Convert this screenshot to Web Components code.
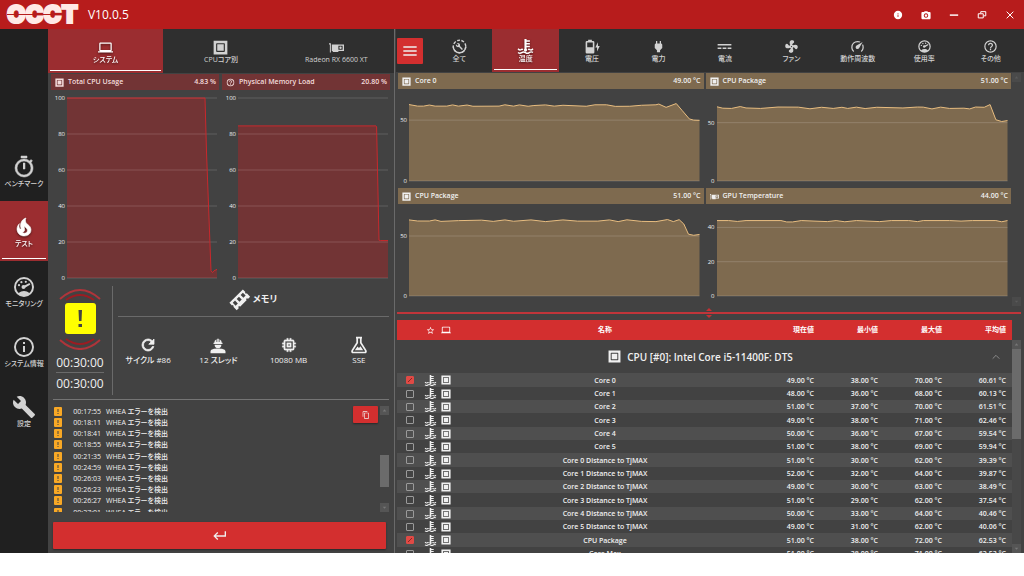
<!DOCTYPE html>
<html lang="ja">
<head>
<meta charset="utf-8">
<title>OCCT V10.0.5</title>
<style>
html, body { margin: 0; height: 100%; background: #fff; }
body {
  font: 500 7px/10px "Open Sans", "Noto Sans CJK JP", sans-serif;
  font-feature-settings: "palt";
  color: #f0f0f0;
}
</style>
</head>
<body>
<occt-app></occt-app>
<script>
const define = (name, html, setup) => {
  const template = document.createElement('template');
  template.innerHTML = html;
  customElements.define(name, class extends HTMLElement {
    connectedCallback() {
      if (this.shadowRoot) return;
      const root = this.attachShadow({ mode: 'open' });
      root.append(template.content.cloneNode(true));
      if (setup) setup(this, root);
    }
  });
};

/* ---------- icons ---------- */
const ICONS = {
  laptop: '<path d="M4,6H20V16H4M20,18A2,2 0 0,0 22,16V6C22,4.89 21.1,4 20,4H4C2.89,4 2,4.89 2,6V16A2,2 0 0,0 4,18H0V20H24V18H20Z"/>',
  timer: '<path d="M12,20A7,7 0 0,1 5,13A7,7 0 0,1 12,6A7,7 0 0,1 19,13A7,7 0 0,1 12,20M19.03,7.39L20.45,5.97C20,5.46 19.55,5 19.04,4.56L17.62,6C16.07,4.74 14.12,4 12,4A9,9 0 0,0 3,13A9,9 0 0,0 12,22C17,22 21,17.97 21,13C21,10.88 20.26,8.93 19.03,7.39M11,14H13V8H11M15,1H9V3H15V1Z" stroke="currentColor" stroke-width=".5"/>',
  fire: '<path d="M17.66 11.2C17.43 10.9 17.15 10.64 16.89 10.38C16.22 9.78 15.46 9.35 14.82 8.72C13.33 7.26 13 4.85 13.95 3C13 3.23 12.17 3.75 11.46 4.32C8.87 6.4 7.85 10.07 9.07 13.22C9.11 13.32 9.15 13.42 9.15 13.55C9.15 13.77 9 13.97 8.8 14.05C8.57 14.15 8.33 14.09 8.14 13.93C8.08 13.88 8.04 13.83 8 13.76C6.87 12.33 6.69 10.28 7.45 8.64C5.78 10 4.87 12.3 5 14.47C5.06 14.97 5.12 15.47 5.29 15.97C5.43 16.57 5.7 17.17 6 17.7C7.08 19.43 8.95 20.67 10.96 20.92C13.1 21.19 15.39 20.8 17.03 19.32C18.86 17.66 19.5 15 18.56 12.72L18.43 12.46C18.22 12 17.66 11.2 17.66 11.2M14.5 17.5C14.22 17.74 13.76 18 13.4 18.1C12.28 18.5 11.16 17.94 10.5 17.28C11.69 17 12.4 16.12 12.61 15.23C12.78 14.43 12.46 13.77 12.33 13C12.21 12.26 12.23 11.63 12.5 10.94C12.69 11.32 12.89 11.7 13.13 12C13.9 13 15.11 13.44 15.37 14.8C15.41 14.94 15.43 15.08 15.43 15.23C15.46 16.05 15.1 16.95 14.5 17.5Z" stroke="currentColor" stroke-width=".6"/>',
  gauge: '<path d="M12 2A10 10 0 0 0 2 12A10 10 0 0 0 12 22A10 10 0 0 0 22 12A10 10 0 0 0 12 2M12 4A8 8 0 0 1 20 12C20 14.4 19 16.5 17.3 18C15.9 16.7 14 16 12 16C10 16 8.2 16.7 6.7 18C5 16.5 4 14.4 4 12A8 8 0 0 1 12 4Z"/><circle cx="11.5" cy="12" r="2"/><path d="M11 11.2L17 8.2C18.3 7.8 18.8 9.4 17.7 9.9L12.5 13Z"/><circle cx="7" cy="10.2" r="1.1"/><circle cx="9.4" cy="7.2" r="1.1"/><circle cx="13.8" cy="6.8" r="1.1"/>',
  info: '<path d="M11,9H13V7H11M12,20C7.59,20 4,16.41 4,12C4,7.59 7.59,4 12,4C16.41,4 20,7.59 20,12C20,16.41 16.41,20 12,20M12,2A10,10 0 0,0 2,12A10,10 0 0,0 12,22A10,10 0 0,0 22,12A10,10 0 0,0 12,2M11,17H13V11H11V17Z"/>',
  infofill: '<path d="M13,9H11V7H13M13,17H11V11H13M12,2A10,10 0 0,0 2,12A10,10 0 0,0 12,22A10,10 0 0,0 22,12A10,10 0 0,0 12,2Z"/>',
  help: '<path d="M11,18H13V16H11V18M12,2A10,10 0 0,0 2,12A10,10 0 0,0 12,22A10,10 0 0,0 22,12A10,10 0 0,0 12,2M12,20C7.59,20 4,16.41 4,12C4,7.59 7.59,4 12,4C16.41,4 20,7.59 20,12C20,16.41 16.41,20 12,20M12,6A4,4 0 0,0 8,10H10A2,2 0 0,1 12,8A2,2 0 0,1 14,10C14,12 11,11.75 11,15H13C13,12.75 16,12.5 16,10A4,4 0 0,0 12,6Z"/>',
  wrench: '<path d="M22.7,19L13.6,9.9C14.5,7.6 14,4.9 12.1,3C10.1,1 7.1,0.6 4.7,1.7L9,6L6,9L1.6,4.7C0.4,7.1 0.9,10.1 2.9,12.1C4.8,14 7.5,14.5 9.8,13.6L18.9,22.7C19.3,23.1 19.9,23.1 20.3,22.7L22.6,20.4C23.1,20 23.1,19.3 22.7,19Z"/>',
  refresh: '<path d="M17.65,6.35C16.2,4.9 14.21,4 12,4A8,8 0 0,0 4,12A8,8 0 0,0 12,20C15.73,20 18.84,17.45 19.73,14H17.65C16.83,16.33 14.61,18 12,18A6,6 0 0,1 6,12A6,6 0 0,1 12,6C13.66,6 15.14,6.69 16.22,7.78L13,11H20V4L17.65,6.35Z" stroke="currentColor"/>',
  memory: '<path d="M17,17H7V7H17M21,11V9H19V7C19,5.89 18.1,5 17,5H15V3H13V5H11V3H9V5H7C5.89,5 5,5.89 5,7V9H3V11H5V13H3V15H5V17A2,2 0 0,0 7,19H9V21H11V19H13V21H15V19H17A2,2 0 0,0 19,17V15H21V13H19V11M13,13H11V11H13M15,9H9V15H15V9Z" stroke="currentColor" stroke-width=".4"/>',
  copy: '<path d="M19,21H8V7H19M19,5H8A2,2 0 0,0 6,7V21A2,2 0 0,0 8,23H19A2,2 0 0,0 21,21V7A2,2 0 0,0 19,5M16,1H4A2,2 0 0,0 2,3V17H4V3H16V1Z"/>',
  enter: '<path d="M19,5V11H5.83L9.41,7.41L8,6L2,12L8,18L9.41,16.58L5.83,13H21V5H19Z"/>',
  menu: '<path d="M2,5H22V7H2V5M2,11H22V13H2V11M2,17H22V19H2V17Z"/>',
  plug: '<path d="M16,7V3H14V7H10V3H8V7C7,7 6,8 6,9V14.5L9.5,18V21H14.5V18L18,14.5V9C18,8 17,7 16,7Z"/>',
  dc: '<path d="M1,8H23V10.5H1ZM1,13.5H7V16H1ZM9,13.5H15V16H9ZM17,13.5H23V16H17Z"/>',
  fan: '<path d="M12,11A1,1 0 0,0 11,12A1,1 0 0,0 12,13A1,1 0 0,0 13,12A1,1 0 0,0 12,11M12.5,2C17,2 17.11,5.57 14.75,6.75C13.76,7.24 13.32,8.29 13.13,9.22C13.61,9.42 14.03,9.73 14.35,10.13C18.05,8.13 22.03,8.92 22.03,12.5C22.03,17 18.46,17.1 17.28,14.73C16.78,13.74 15.72,13.3 14.79,13.11C14.59,13.59 14.28,14 13.88,14.34C15.87,18.03 15.08,22 11.5,22C7,22 6.91,18.42 9.27,17.24C10.25,16.75 10.69,15.71 10.89,14.79C10.4,14.59 9.97,14.27 9.65,13.87C5.96,15.85 2,15.07 2,11.5C2,7 5.56,6.89 6.74,9.26C7.24,10.25 8.29,10.68 9.22,10.87C9.41,10.39 9.73,9.97 10.14,9.65C8.15,5.96 8.94,2 12.5,2Z"/>',
  speed: '<path d="M12,16A3,3 0 0,1 9,13C9,11.88 9.61,10.9 10.5,10.39L20.21,4.77L14.68,14.35C14.18,15.33 13.17,16 12,16M12,3C13.81,3 15.5,3.5 16.97,4.32L14.87,5.53C14,5.19 13,5 12,5A8,8 0 0,0 4,13C4,15.21 4.89,17.21 6.34,18.65H6.35C6.74,19.04 6.74,19.67 6.35,20.06C5.96,20.45 5.32,20.45 4.93,20.07C3.12,18.26 2,15.76 2,13A10,10 0 0,1 12,3M22,13C22,15.76 20.88,18.26 19.07,20.07C18.68,20.45 18.05,20.45 17.66,20.06C17.27,19.67 17.27,19.04 17.66,18.65C19.11,17.2 20,15.21 20,13C20,12 19.81,11 19.46,10.1L20.67,8C21.5,9.5 22,11.18 22,13Z"/>',
  star: '<path d="M12,15.39L8.24,17.66L9.23,13.38L5.91,10.5L10.29,10.13L12,6.09L13.71,10.13L18.09,10.5L14.77,13.38L15.76,17.66M22,9.24L14.81,8.63L12,2L9.19,8.63L2,9.24L7.45,13.97L5.82,21L12,17.27L18.18,21L16.54,13.97L22,9.24Z"/>',
  chip: '<path fill-rule="evenodd" d="M1,1H23V23H1ZM5,6V18L6,19H18L19,18V6L18,5H6ZM6.8,6.8H17.2V17.2H6.8Z"/>',
  coolant: '<path d="M10.3,0H13.7V2H19V4.4H13.7V6.4H19V8.8H13.7V10.8H19V13.2H13.7V15.5A2.6,2.6 0 1,1 10.3,15.5Z"/><path d="M0,15.5Q2.500,18.500 5,17Q6.5,16 8,17M24,15.5Q21.500,18.500 19,17Q17.500,16 16,17M0,21.5Q3,24 6,21.8T12,21.8T18,21.8T24,21.5" fill="none" stroke="currentColor" stroke-width="2.2"/>',
  battery: '<path fill-rule="evenodd" d="M5,1H11V3H13Q15,3 15,5V21Q15,23 13,23H3Q1,23 1,21V5Q1,3 3,3H5ZM3.5,5.5V13H12.5V5.5Z"/><path d="M20.5,5L16.5,13.5H19.3V20L23.6,11H20.8Z"/>',
  all: '<circle cx="12" cy="12" r="10" fill="none" stroke="currentColor" stroke-width="2.2" stroke-dasharray="4.6 2.4"/><path d="M2,12A10,10 0 0,0 12,22A10,10 0 0,0 22,12" fill="none" stroke="currentColor" stroke-width="2.2"/><path d="M17.5,16L12.8,11.3C13.2,9.8 12.8,8.3 11.7,7.3C10.6,6.3 9.2,6.1 8,6.6L10.4,9L8.8,10.6L6.4,8.3C5.9,9.6 6.2,11 7.2,12C8.3,13.1 9.9,13.4 11.2,12.9L15.9,17.6Z"/>',
  gpu: '<path fill-rule="evenodd" d="M0,5H3V20H1.4V7H0ZM4.5,7H24V17.5H15V19H6V17.5H4.5ZM15,9V15.5H21.8V9Z"/><circle cx="18.4" cy="12.3" r="1.9"/>',
  ram: '<g transform="rotate(-45 12 12)"><path fill-rule="evenodd" d="M0,6H24V10.500A1,1 0 0,0 24,13V19H20V17.500H18V19H6V17.500H4V19H0V13A1,1 0 0,0 0,10.500ZM3,9V14H7V9ZM10,9V14H14V9ZM17,9V14H21V9Z"/></g>',
  worker: '<path d="M7,9A5,5 0 0,1 10,4.2V8H11V3.5H13V8H14V4.2A5,5 0 0,1 17,9H18V10.5H6V9ZM7.5,11.5H16.5A4.5,4.5 0 0,1 7.5,11.5M2,23V20.5C2,17.5 7,16.5 12,16.5S22,17.5 22,20.5V23Z"/>',
  flask: '<path d="M8,2.2H16M9.6,2.5V9L3,19.5Q2,22 4.5,22H19.5Q22,22 21,19.5L14.4,9V2.5" fill="none" stroke="currentColor" stroke-width="2.3"/><path d="M6.5,19L10,14L12,16L14,13.5L17.5,19Z"/>',
  camera: '<path fill-rule="evenodd" d="M3,5H8V3H16V5H21Q23,5 23,7V20Q23,22 21,22H3Q1,22 1,20V7Q1,5 3,5ZM12,8A5.3,5.3 0 1,0 12.01,8ZM12,10.2A3,3 0 1,1 11.99,10.2Z"/>',
  min: '<path d="M2,10.5H22V14H2Z"/>',
  restore: '<path d="M9,8V4H21V14H16M3,9H15V19H3Z" fill="none" stroke="currentColor" stroke-width="2.4"/>',
  close: '<path d="M4,4L20,20M20,4L4,20" fill="none" stroke="currentColor" stroke-width="2.4"/>',
  chevron: '<path d="M4,16L12,8L20,16" fill="none" stroke="currentColor" stroke-width="2"/>',
  up: '<path d="M6,15L12,8L18,15Z"/>',
  down: '<path d="M6,9L12,16L18,9Z"/>'
};
define('ui-icon', `<style>
:host { display: block; flex: none; width: var(--size, 16px); height: var(--size, 16px); }
svg { display: block; width: 100%; height: 100%; fill: currentColor; overflow: visible; }
</style><svg viewBox="0 0 24 24" aria-hidden="true"></svg>`,
(el, root) => { root.querySelector('svg').innerHTML = ICONS[el.getAttribute('name')]; });

/* ---------- title bar ---------- */
define('title-bar', `<style>
:host { display: flex; align-items: center; height: 29px; padding: 0 9px 0 7px; background: #b71c1c; color: #fff; }
.logo { position: relative; font: 900 24px/29px Inter, sans-serif; color: #ffe9e6; -webkit-text-stroke: 2px #ffe9e6; }
.logo::after { content: ""; position: absolute; left: 0; right: 18px; top: 14px; height: 1px; background: #b71c1c; }
h1 { margin: 0 auto 0 10px; font-size: 12px; line-height: 16px; font-weight: 500; }
.win { display: flex; gap: 18px; --size: 10px; }
button { all: unset; display: block; }
</style>
<span class="logo">OCCT</span><h1>V10.0.5</h1>
<div class="win">
<button aria-label="情報"><ui-icon name="infofill"></ui-icon></button>
<button aria-label="スクリーンショット"><ui-icon name="camera"></ui-icon></button>
<button aria-label="最小化"><ui-icon name="min"></ui-icon></button>
<button aria-label="元に戻す"><ui-icon name="restore"></ui-icon></button>
<button aria-label="閉じる"><ui-icon name="close"></ui-icon></button>
</div>`);

/* ---------- navigation button, used by the side bar and both tab bars ---------- */
define('nav-tab', `<style>
:host { display: block; flex: 1; min-width: 0; color: #d2d2d2; --size: 15px; }
:host([active]) { color: #fff; background: #9b2d30; }
:host([side]) { flex: none; height: 60px; --size: 24px; }
button { all: unset; box-sizing: border-box; width: 100%; height: 100%; padding-top: 2px; display: flex; flex-direction: column;
  align-items: center; justify-content: center; }
:host([active]) button { background: linear-gradient(#fff, #fff) center bottom 2px / calc(100% - 4px) 1px no-repeat; }
:host([active]) ui-icon, :host([active]) span { filter: drop-shadow(0 1px 1px #0008); }
span { white-space: nowrap; }
</style><button><ui-icon></ui-icon><span><slot></slot></span></button>`,
(el, root) => {
  const icon = document.createElement('ui-icon');
  icon.setAttribute('name', el.getAttribute('icon'));
  root.querySelector('ui-icon').replaceWith(icon);
});

define('side-nav', `<style>
:host { display: flex; flex-direction: column; justify-content: center; background: #202020; }
</style>
<nav>
<nav-tab side icon="timer">ベンチマーク</nav-tab>
<nav-tab side icon="fire" active>テスト</nav-tab>
<nav-tab side icon="gauge">モニタリング</nav-tab>
<nav-tab side icon="info">システム情報</nav-tab>
<nav-tab side icon="wrench">設定</nav-tab>
</nav>`);

/* ---------- scroll bar: the range gives the thumb's start and end in percent of the track ---------- */
define('scroll-bar', `<style>
:host { display: flex; flex-direction: column; width: 9px; background: var(--track, transparent); }
i { display: grid; place-items: center; flex: none; height: 9px; background: #555; color: #777; --size: 7px; }
:host([idle]) i { background: #4a4a4a; color: #5a5a5a; }
b { background: #6b6b6b; }
</style><i><ui-icon name="up"></ui-icon></i><s></s><b></b><s></s><i><ui-icon name="down"></ui-icon></i>`,
(el, root) => {
  const [from, to] = (el.getAttribute('range') || '0 0').split(' ').map(Number);
  const [before, after] = root.querySelectorAll('s');
  before.style.flex = `${from} 0 0px`;
  root.querySelector('b').style.flex = `${to - from} 0 0px`;
  after.style.flex = `${100 - to} 0 0px`;
});

/* ---------- chart ---------- */
const SERIES = {
  cpu: [[0,100],[92,100],[93,70],[96,4],[97,3],[98,4],[100,4.8]],
  mem: [[0,84.5],[92,84.5],[92.4,84],[94,21],[95,20.8],[100,20.8]],
  core0: [[0,62.8],[3,61.5],[5,61.5],[7,62.4],[9,61.5],[13,61.5],[15,62.5],[17,61.5],[20,62.4],[22,61.4],[31,61.5],[33,62.6],[36,61.5],[38,62.5],[41,61.4],[43,62],[47,62.5],[50,61.5],[53,62.2],[61,61.4],[64,62.6],[68,62.6],[71,61.3],[76,61.4],[80,62.2],[85,62.6],[86,63.2],[88.5,60.5],[92,63.6],[94,58],[96.5,51],[98,50],[100,49.8]],
  pkgA: [[0,63.4],[3,62.5],[7,62.5],[9,63.4],[11,62.2],[17,62.8],[25,63.2],[29,62.2],[33,63.4],[36,62.3],[42,63.4],[47,62],[53,63.4],[58,62.4],[65,62.4],[69,63.4],[72,62],[75,63.5],[80,62.2],[85,62],[89,63.7],[91,62],[93,63.6],[94.6,60],[96.2,51.5],[98,50.6],[100,51.3]],
  pkgB: [[0,63.6],[2,62.4],[5,62.2],[8,63.8],[10,62.6],[15,62.2],[21,63.4],[28,63.3],[32,61.9],[36,63.2],[40,62.2],[43,63.2],[45,62.2],[48,63.3],[51,62.1],[55,63.2],[64,62.6],[69,63.4],[71,63.3],[74,61.8],[77,63.3],[80,62.2],[85,62.4],[87,61.8],[89,63.4],[92,63.2],[94,65.5],[96,52.5],[98,51],[100,51.8]],
  gpu: [[0,44],[4,44],[7,43.5],[10,44],[22,44],[24,43.2],[26,43.2],[29,44],[38,43.4],[41,44],[44,43.3],[48,44],[56,43.4],[60,44],[66,44],[69,43.4],[71,44],[80,44],[84,43.7],[88,44],[96,44],[98,43.3],[100,44]]
};

define('sensor-chart', `<style>
:host { display: flex; flex-direction: column; min-width: 0; --head: #7e6a4f; --line: #e8bd80; --fill: #7e6a4f; --axis: 11px; }
:host([tone="red"]) { --head: #723435; --line: #c9282c; --fill: #723435; --axis: 16px; }
header { display: flex; align-items: center; gap: 4px; height: 16px; padding: 0 3px 0 4px; background: var(--head); --size: 9px; }
header output { margin-left: auto; }
header span, header output { line-height: 16px; font-weight: 600; }
:host([tone="red"]) header { color: #f4dcdc; }
figure { flex: 1; display: grid; grid-template-columns: var(--axis) 1fr; margin: 8px 4px 7px 0; min-height: 0; }
:host([tone="red"]) figure { margin: 8px 2px 4px 0; }
.axis { display: flex; flex-direction: column; font-size: 6px; padding-right: 2px; text-align: right; }
.axis span { height: 0; line-height: 0; }
svg { display: block; width: 100%; height: 100%; min-height: 0; overflow: visible; }
svg * { vector-effect: non-scaling-stroke; }
</style>
<header><span></span><output></output></header>
<figure><div class="axis"></div><svg viewBox="0 0 100 100" preserveAspectRatio="none" aria-hidden="true"></svg></figure>`,
(el, root) => {
  const get = n => el.getAttribute(n);
  const max = Number(get('max'));
  const ticks = get('ticks').split(' ').map(Number);
  const icon = document.createElement('ui-icon');
  icon.setAttribute('name', get('icon'));
  root.querySelector('header').prepend(icon);
  root.querySelector('header span').textContent = get('label');
  root.querySelector('output').textContent = get('value');
  let last = max;
  root.querySelector('.axis').innerHTML = ticks.map(t => {
    const gap = `<i style="flex:${last - t} 0 0px"></i>`;
    last = t;
    return (t === max ? '' : gap) + `<span>${t}</span>`;
  }).join('');
  const y = v => 100 - v / max * 100;
  const line = SERIES[get('series')].map(([x, v]) => `${x},${y(v)}`).join(' ');
  const grid = ticks.map(t => `<path d="M0,${y(t)}H100" stroke="#fff" stroke-opacity=".16"/>`).join('');
  root.querySelector('svg').innerHTML =
    `<polygon points="0,100 ${line} 100,100" fill="var(--fill)"/>${grid}` +
    `<polyline points="${line}" fill="none" stroke="var(--line)"/>`;
});

/* ---------- test status ---------- */
define('test-stat', `<style>
:host { flex: 1; display: flex; flex-direction: column; align-items: center; gap: 1px; font-size: 8px; --size: 18px; }
</style><ui-icon></ui-icon><span><slot></slot></span>`,
(el, root) => {
  const icon = document.createElement('ui-icon');
  icon.setAttribute('name', el.getAttribute('icon'));
  root.querySelector('ui-icon').replaceWith(icon);
});

define('test-status', `<style>
:host { display: flex; margin: 4px 5px 0; padding-bottom: 4px; border-bottom: 1px solid #757575; }
.clock { width: 54px; display: flex; flex-direction: column; align-items: center; }
.clock svg { display: block; width: 46px; height: 62px; margin: 2px 0 3px; }
time { font-size: 12px; line-height: 19px; font-weight: 400; }
time + time { border-top: 1px solid #6a6a6a; line-height: 22px; }
.detail { flex: 1; margin-left: 5px; padding-left: 5px; border-left: 1px solid #6a6a6a; }
h2 { box-sizing: border-box; display: flex; align-items: center; justify-content: center; gap: 4px; height: 31px; margin: 0 0 19px;
  padding-bottom: 4px; border-bottom: 1px solid #6a6a6a; font-size: 9px; line-height: 14px; font-weight: 600; --size: 19px; }
.stats { display: flex; margin: 0 -5px; }
</style>
<div class="clock">
<svg viewBox="0 0 46 62" fill="none" aria-hidden="true">
<path d="M3,11Q23,-7 43,11M3,52Q23,70 43,52" stroke="#b0343a" stroke-width="2"/>
<path d="M9,12Q23,2 37,12M9,51Q23,61 37,51" stroke="#9b1c22" stroke-width="2"/>
<rect x="8" y="15" width="31" height="31" rx="3" fill="#ffff00"/>
<path d="M21.500,22H25L24.500,33H22ZM21.500,36H25V39H21.500Z" fill="#424242"/></svg>
<time>00:30:00</time><time>00:30:00</time>
</div>
<div class="detail">
<h2><ui-icon name="ram"></ui-icon>メモリ</h2>
<div class="stats">
<test-stat icon="refresh">サイクル #86</test-stat>
<test-stat icon="worker">12 スレッド</test-stat>
<test-stat icon="memory">10080 MB</test-stat>
<test-stat icon="flask">SSE</test-stat>
</div></div>`);

/* ---------- error log ---------- */
const LOG = ['00:17:55','00:18:11','00:18:41','00:18:55','00:21:35','00:24:59','00:26:03','00:26:23','00:26:27','00:27:01'];
define('error-log', `<style>
:host { display: flex; align-items: flex-start; height: 106px; margin: 6px 5px 10px 6px; }
ul { flex: 1; height: 100%; margin: 0; padding: 0; overflow: hidden; list-style: none; }
li { display: grid; grid-template-columns: 8px 39px 1fr; align-items: center; height: 11px; line-height: 11px; }
li:nth-child(5n) { height: 12px; }
li time { text-align: right; }
li span { margin-left: 5px; }
svg { display: block; width: 8px; height: 9px; }
button { all: unset; display: grid; place-items: center; width: 25px; height: 17px; margin-right: 2px; background: #d32f2f; border-radius: 1px; box-shadow: 0 1px 2px #0006; --size: 8px; }
scroll-bar { height: 100%; }
</style><ul></ul><button aria-label="コピー"><ui-icon name="copy"></ui-icon></button><scroll-bar range="46 82"></scroll-bar>`,
(el, root) => {
  root.querySelector('ul').innerHTML = LOG.map(t =>
    `<li><svg viewBox="0 0 8 9" aria-hidden="true"><rect width="8" height="9" rx="1" fill="#f9a825"/><path d="M3.500,2H4.500V5H3.500ZM3.500,6H4.500V7H3.500Z" fill="#424242"/></svg><time>${t}</time><span>WHEA エラーを検出</span></li>`).join('');
});

/* ---------- left panel ---------- */
define('test-panel', `<style>
:host { display: flex; flex-direction: column; min-width: 0; min-height: 0; border-right: 1px solid #6a6a6a; }
.tabs { display: flex; height: 44px; background: #2f2f2f; }
.charts { flex: 1; display: grid; grid-template-columns: 1fr 1fr; gap: 3px; padding: 1px 4px 0 3px; min-height: 0; }
.go { all: unset; display: grid; place-items: center; height: 27px; margin: 0 8px 4px 5px; background: #d32f2f; border-radius: 1px; box-shadow: 0 1px 2px #0006; --size: 16px; }
</style>
<nav class="tabs">
<nav-tab icon="laptop" active>システム</nav-tab>
<nav-tab icon="chip">CPUコア別</nav-tab>
<nav-tab icon="gpu">Radeon RX 6600 XT</nav-tab>
</nav>
<div class="charts">
<sensor-chart tone="red" icon="chip" label="Total CPU Usage" value="4.83 %" max="100" ticks="100 80 60 40 20 0" series="cpu"></sensor-chart>
<sensor-chart tone="red" icon="help" label="Physical Memory Load" value="20.80 %" max="100" ticks="100 80 60 40 20 0" series="mem"></sensor-chart>
</div>
<test-status></test-status>
<error-log></error-log>
<button class="go" aria-label="戻る"><ui-icon name="enter"></ui-icon></button>`);

/* ---------- sensor table ---------- */
const ROWS = [
  ['Core 0','49.00','38.00','70.00','60.61',1],['Core 1','48.00','36.00','68.00','60.13'],
  ['Core 2','51.00','37.00','70.00','61.51'],['Core 3','49.00','38.00','71.00','62.46'],
  ['Core 4','50.00','36.00','67.00','59.54'],['Core 5','51.00','38.00','69.00','59.94'],
  ['Core 0 Distance to TjMAX','51.00','30.00','62.00','39.39'],['Core 1 Distance to TjMAX','52.00','32.00','64.00','39.87'],
  ['Core 2 Distance to TjMAX','49.00','30.00','63.00','38.49'],['Core 3 Distance to TjMAX','51.00','29.00','62.00','37.54'],
  ['Core 4 Distance to TjMAX','50.00','33.00','64.00','40.46'],['Core 5 Distance to TjMAX','49.00','31.00','62.00','40.06'],
  ['CPU Package','51.00','38.00','72.00','62.53',1],['Core Max','51.00','38.00','71.00','62.53']
];
define('sensor-table', `<style>
:host { display: flex; min-height: 0; overflow: hidden; }
.view { flex: 1; overflow: hidden; }
table { width: 100%; table-layout: fixed; border-collapse: collapse; font-weight: 600; }
th, td { padding: 0; text-align: center; }
th { font-weight: 600; }
.pick { width: 26px; } .kind { width: 15px; } .dev { width: 16px; } .num { width: 64px; }
td.num, th.num { box-sizing: border-box; padding-right: 6px; text-align: right; }
thead tr { height: 20px; background: #d32f2f; color: #fff; }
.group th { height: 33px; font-size: 10px; line-height: 14px; }
.group div { display: grid; grid-template-columns: 32px 1fr 32px; align-items: center; }
.group span { grid-column: 2; display: flex; justify-content: center; align-items: center; gap: 6px; padding-right: 8px; --size: 13px; }
.group button { all: unset; --size: 10px; color: #999; justify-self: center; }
.rows tr { height: 13px; line-height: 13px; }
.rows tr:nth-child(3n + 1) { height: 14px; }
.rows tr:nth-child(odd) { background: #4f4f4f; }
ui-icon { margin: auto; }
.group ui-icon { margin: 0; }
input { appearance: none; display: block; width: 8px; height: 8px; margin: auto; border: 1px solid #9a9a9a; border-radius: 1px; box-sizing: border-box; }
input:checked { border-color: #e04a45; background: #e04a45 linear-gradient(-45deg, transparent 44%, #8c2522 44% 60%, transparent 60%) center / 4px 4px no-repeat; }
scroll-bar { margin-top: 20px; --track: #484848; }
</style>
<div class="view"><table>
<thead><tr><th class="pick" aria-label="選択"></th>
<th class="kind" aria-label="種別"><ui-icon name="star" style="--size:9px"></ui-icon></th>
<th class="dev" aria-label="デバイス"><ui-icon name="laptop" style="--size:10px"></ui-icon></th>
<th>名称</th><th class="num">現在値</th><th class="num">最小値</th><th class="num">最大値</th><th class="num">平均値</th></tr></thead>
<tbody><tr class="group"><th colspan="8"><div><span><ui-icon name="chip"></ui-icon>CPU [#0]: Intel Core i5-11400F: DTS</span><button aria-label="折りたたむ"><ui-icon name="chevron"></ui-icon></button></div></th></tr></tbody>
<tbody class="rows"></tbody>
</table></div>
<scroll-bar range="0 46"></scroll-bar>`,
(el, root) => {
  root.querySelector('.rows').innerHTML = ROWS.map(([name, a, b, c, d, on]) =>
    `<tr><td><input type="checkbox" aria-label="${name}"${on ? ' checked' : ''}></td>` +
    `<td><ui-icon name="coolant" style="--size:11px"></ui-icon></td><td><ui-icon name="chip" style="--size:10px"></ui-icon></td>` +
    `<td>${name}</td>${[a, b, c, d].map(v => `<td class="num">${v} °C</td>`).join('')}</tr>`).join('');
});

/* ---------- right panel ---------- */
define('monitor-panel', `<style>
:host { display: flex; flex-direction: column; min-width: 0; min-height: 0; }
.tabs { display: flex; align-items: center; height: 43px; margin-left: 1px; background: #2f2f2f; }
.tabs nav-tab { align-self: stretch; }
.menu { all: unset; display: grid; place-items: center; flex: none; width: 26px; height: 26px; margin: 0 3px 0 1px; background: #d32f2f; border-radius: 1px; --size: 16px; }
.graphs { display: flex; height: 233px; margin: 1px 3px 0; }
.grid { flex: 1; display: grid; grid-template-columns: 1fr 1fr; grid-auto-rows: 115px; column-gap: 2px; margin-right: 1px; }
.split { display: flex; flex-direction: column; align-items: center; justify-content: center; height: 14px; margin: 0 3px 0 2px; color: #c62f33; }
.split hr { width: 100%; height: 2px; margin: 1px 0; border: 0; background: #c0353a; }
.split svg { display: block; width: 6px; height: 3px; fill: currentColor; }
sensor-table { flex: 1; margin: 0 3px 0 2px; }
</style>
<nav class="tabs">
<button class="menu" aria-label="メニュー"><ui-icon name="menu"></ui-icon></button>
<nav-tab icon="all">全て</nav-tab>
<nav-tab icon="coolant" active>温度</nav-tab>
<nav-tab icon="battery">電圧</nav-tab>
<nav-tab icon="plug">電力</nav-tab>
<nav-tab icon="dc">電流</nav-tab>
<nav-tab icon="fan">ファン</nav-tab>
<nav-tab icon="speed">動作周波数</nav-tab>
<nav-tab icon="gauge">使用率</nav-tab>
<nav-tab icon="help">その他</nav-tab>
</nav>
<div class="graphs">
<div class="grid">
<sensor-chart icon="chip" label="Core 0" value="49.00 °C" max="69" ticks="50 0" series="core0"></sensor-chart>
<sensor-chart icon="chip" label="CPU Package" value="51.00 °C" max="72" ticks="50 0" series="pkgB"></sensor-chart>
<sensor-chart icon="chip" label="CPU Package" value="51.00 °C" max="70" ticks="50 0" series="pkgA"></sensor-chart>
<sensor-chart icon="gpu" label="GPU Temperature" value="44.00 °C" max="49" ticks="40 20 0" series="gpu"></sensor-chart>
</div>
<scroll-bar idle></scroll-bar>
</div>
<div class="split">
<svg viewBox="0 0 6 3" aria-hidden="true"><path d="M0,3L3,0L6,3Z"/></svg><hr>
<svg viewBox="0 0 6 3" aria-hidden="true"><path d="M0,0L3,3L6,0Z"/></svg>
</div>
<sensor-table></sensor-table>`);

/* ---------- application ---------- */
define('occt-app', `<style>
:host { display: grid; grid-template: auto minmax(0, 1fr) / 48px minmax(0, 347fr) minmax(0, 629fr); height: calc(100vh - 23px); background: #424242; overflow: hidden; }
title-bar { grid-column: 1 / -1; }
</style>
<title-bar></title-bar><side-nav></side-nav><test-panel></test-panel><monitor-panel></monitor-panel>`);
</script>
</body>
</html>
